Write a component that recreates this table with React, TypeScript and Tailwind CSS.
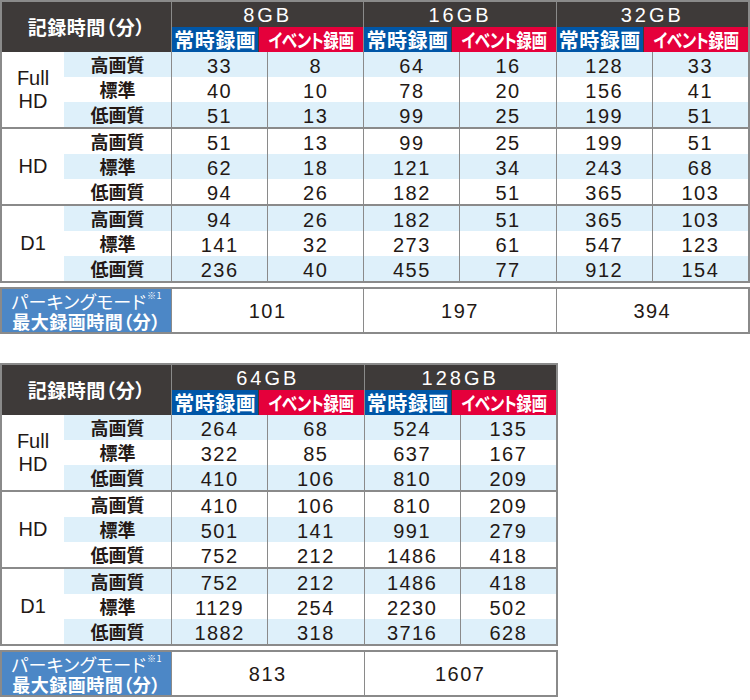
import React from 'react'

type Size = { label: string; rows: number[][]; parking: number }

const table1: Size[] = [
  { label: '8GB', rows: [[33, 8], [40, 10], [51, 13], [51, 13], [62, 18], [94, 26], [94, 26], [141, 32], [236, 40]], parking: 101 },
  { label: '16GB', rows: [[64, 16], [78, 20], [99, 25], [99, 25], [121, 34], [182, 51], [182, 51], [273, 61], [455, 77]], parking: 197 },
  { label: '32GB', rows: [[128, 33], [156, 41], [199, 51], [199, 51], [243, 68], [365, 103], [365, 103], [547, 123], [912, 154]], parking: 394 },
]

const table2: Size[] = [
  { label: '64GB', rows: [[264, 68], [322, 85], [410, 106], [410, 106], [501, 141], [752, 212], [752, 212], [1129, 254], [1882, 318]], parking: 813 },
  { label: '128GB', rows: [[524, 135], [637, 167], [810, 209], [810, 209], [991, 279], [1486, 418], [1486, 418], [2230, 502], [3716, 628]], parking: 1607 },
]

const groups = [['Full', 'HD'], ['HD'], ['D1']]
const qualities = ['高画質', '標準', '低画質']

const jp = { fontFamily: '"Noto Sans CJK JP", "Noto Sans", sans-serif', fontFeatureSettings: '"palt"' }
const num = { fontFamily: '"Liberation Sans", Arial, sans-serif' }

function RecTable({ sizes, width }: { sizes: Size[]; width: string }) {
  const cols = sizes.length * 2
  const gridCols = cols === 6 ? 'grid-cols-[62px_107px_repeat(6,1fr)]' : 'grid-cols-[62px_107px_repeat(4,1fr)]'

  return (
    <div className={width}>
      <div className="border-2 border-[#8a8a8a]">
        {/* header */}
        <div className={`grid ${gridCols} grid-rows-[25px_25px] bg-[#3e3a39]`}>
          <div
            className="col-span-2 row-span-2 flex items-center justify-center whitespace-nowrap text-[19px] leading-[22px] font-bold tracking-[0.5px] text-white"
            style={jp}
          >
            記録時間（分）
          </div>
          {sizes.map((s) => (
            <div
              key={s.label}
              className="col-span-2 flex items-center justify-center border-l border-[#8a8a8a] pt-[1px] text-[20px] leading-none tracking-[3px] text-white"
              style={num}
            >
              {s.label}
            </div>
          ))}
          {sizes.map((s) => (
            <React.Fragment key={s.label + 'sub'}>
              <div
                className="flex items-center justify-center whitespace-nowrap border-l border-[#8a8a8a] bg-[#0056a7] text-[20px] leading-[22px] font-bold tracking-[0.5px] text-white"
                style={jp}
              >
                常時録画
              </div>
              <div
                className="flex items-center justify-center whitespace-nowrap border-l border-[#3e3a39] bg-[#e5003b] text-[19px] leading-[22px] font-bold text-white"
                style={jp}
              >
                <span className="inline-block scale-x-[0.82] tracking-[-0.5px]">イベント録画</span>
              </div>
            </React.Fragment>
          ))}
        </div>

        {/* body */}
        {groups.map((g, gi) => (
          <div
            key={gi}
            className={`grid ${gridCols} grid-rows-[25px_25px_25px] ${gi > 0 ? 'border-t-2 border-[#8a8a8a]' : ''}`}
          >
            <div
              className="row-span-3 flex flex-col items-center justify-center bg-white text-[20px] leading-[23px] text-[#231815]"
              style={num}
            >
              {g.map((t) => (
                <span key={t}>{t}</span>
              ))}
            </div>
            {qualities.map((q, qi) => {
              const r = gi * 3 + qi
              const stripe = r % 2 === 0 ? 'bg-[#def0fa]' : 'bg-white'
              return (
                <React.Fragment key={q}>
                  <div
                    className={`flex items-center justify-center ${stripe} text-[18px] leading-[21px] font-bold text-[#231815]`}
                    style={jp}
                  >
                    {q}
                  </div>
                  {sizes.map((s) => (
                    <React.Fragment key={s.label}>
                      {s.rows[r].map((v, vi) => (
                        <div
                          key={vi}
                          className={`flex items-center justify-center border-l border-[#8a8a8a] ${stripe} pt-[2px] text-[20px] leading-none tracking-[1.5px] text-[#231815]`}
                          style={num}
                        >
                          {v}
                        </div>
                      ))}
                    </React.Fragment>
                  ))}
                </React.Fragment>
              )
            })}
          </div>
        ))}
      </div>

      {/* parking */}
      <div className="mt-[4px] border-2 border-[#8a8a8a]">
        <div className={`grid ${cols === 6 ? 'grid-cols-[169px_repeat(3,1fr)]' : 'grid-cols-[169px_repeat(2,1fr)]'} h-[43px]`}>
          <div
            className="flex flex-col items-center justify-center whitespace-nowrap bg-[#4c87c6] text-white"
            style={jp}
          >
            <span className="flex h-[20px] items-start text-[18px] leading-[20px] tracking-[0.3px]">
              パーキングモード<span className="ml-[1px] text-[9px] leading-[10px]">※1</span>
            </span>
            <span className="h-[20px] text-[18px] leading-[20px] font-bold tracking-[0.5px]">最大録画時間（分）</span>
          </div>
          {sizes.map((s) => (
            <div
              key={s.label}
              className="flex items-center justify-center border-l border-[#8a8a8a] bg-white text-[20px] tracking-[1.5px] text-[#231815]"
              style={num}
            >
              {s.parking}
            </div>
          ))}
        </div>
      </div>
    </div>
  )
}

export default function App() {
  return (
    <div className="h-[700px] w-[750px] bg-white">
      <RecTable sizes={table1} width="w-[750px]" />
      <div className="h-[29px]" />
      <RecTable sizes={table2} width="w-[558px]" />
    </div>
  )
}
